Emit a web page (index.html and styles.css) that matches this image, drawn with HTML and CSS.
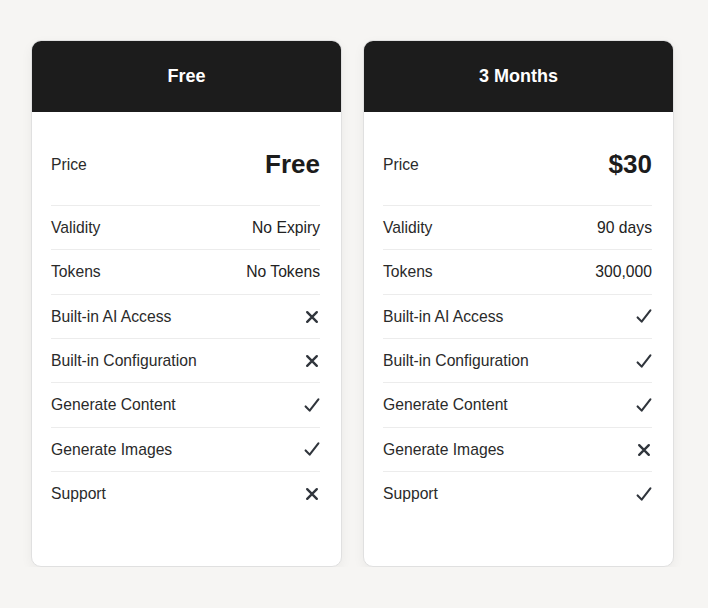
FILE: index.html
```html
<!DOCTYPE html>
<html>
<head>
<meta charset="utf-8">
<link rel="stylesheet" href="styles.css">
</head>
<body>
<div class="plans">
  <div class="card">
    <div class="card-head">Free</div>
    <div class="card-body">
      <div class="row price-row"><span class="label">Price</span><span class="price">Free</span></div>
      <div class="row"><span class="label">Validity</span><span class="value">No Expiry</span></div>
      <div class="row"><span class="label">Tokens</span><span class="value">No Tokens</span></div>
      <div class="row"><span class="label">Built-in AI Access</span><svg class="icon" viewBox="0 0 16 16"><path d="M2.5 2.5L13.5 13.5M13.5 2.5L2.5 13.5"/></svg></div>
      <div class="row"><span class="label">Built-in Configuration</span><svg class="icon" viewBox="0 0 16 16"><path d="M2.5 2.5L13.5 13.5M13.5 2.5L2.5 13.5"/></svg></div>
      <div class="row"><span class="label">Generate Content</span><svg class="icon check" viewBox="0 0 16 16"><path d="M1.2 9L5.5 13.5L14.8 1.5"/></svg></div>
      <div class="row"><span class="label">Generate Images</span><svg class="icon check" viewBox="0 0 16 16"><path d="M1.2 9L5.5 13.5L14.8 1.5"/></svg></div>
      <div class="row"><span class="label">Support</span><svg class="icon" viewBox="0 0 16 16"><path d="M2.5 2.5L13.5 13.5M13.5 2.5L2.5 13.5"/></svg></div>
    </div>
  </div>
  <div class="card">
    <div class="card-head">3 Months</div>
    <div class="card-body">
      <div class="row price-row"><span class="label">Price</span><span class="price">$30</span></div>
      <div class="row"><span class="label">Validity</span><span class="value">90 days</span></div>
      <div class="row"><span class="label">Tokens</span><span class="value">300,000</span></div>
      <div class="row"><span class="label">Built-in AI Access</span><svg class="icon check" viewBox="0 0 16 16"><path d="M1.2 9L5.5 13.5L14.8 1.5"/></svg></div>
      <div class="row"><span class="label">Built-in Configuration</span><svg class="icon check" viewBox="0 0 16 16"><path d="M1.2 9L5.5 13.5L14.8 1.5"/></svg></div>
      <div class="row"><span class="label">Generate Content</span><svg class="icon check" viewBox="0 0 16 16"><path d="M1.2 9L5.5 13.5L14.8 1.5"/></svg></div>
      <div class="row"><span class="label">Generate Images</span><svg class="icon" viewBox="0 0 16 16"><path d="M2.5 2.5L13.5 13.5M13.5 2.5L2.5 13.5"/></svg></div>
      <div class="row"><span class="label">Support</span><svg class="icon check" viewBox="0 0 16 16"><path d="M1.2 9L5.5 13.5L14.8 1.5"/></svg></div>
    </div>
  </div>
</div>
</body>
</html>
```

FILE: styles.css
```css
html, body {
  margin: 0;
  padding: 0;
  background: #f6f5f3;
  font-family: "Liberation Sans", Arial, sans-serif;
}
.plans {
  display: flex;
  gap: 21px;
  padding: 40px 0 0 31px;
}
.card {
  width: 311px;
  height: 527px;
  box-sizing: border-box;
  background: #fff;
  border: 1px solid #e0e0e0;
  border-radius: 10px;
  overflow: hidden;
  box-shadow: 0 4px 12px rgba(0,0,0,0.05);
  display: flex;
  flex-direction: column;
}
.card-head {
  background: #1c1c1c;
  color: #fff;
  font-weight: bold;
  font-size: 18px;
  text-align: center;
  height: 72px;
  line-height: 72px;
  margin-top: -1px;
  margin-left: -1px;
  margin-right: -1px;
}
.card-body {
  padding: 0 21px 0 19px;
}
.row {
  display: flex;
  justify-content: space-between;
  align-items: center;
  height: 42.33px;
  padding-top: 1px;
  border-bottom: 1px solid #ececec;
  font-size: 15.7px;
  color: #222;
}
.row:last-child {
  border-bottom: none;
}
.price-row {
  height: 94px;
  padding-top: 12px;
  box-sizing: border-box;
}
.label {
  color: #2a2a2a;
}
.value {
  color: #222;
}
.price {
  font-size: 26px;
  font-weight: bold;
  color: #1c1c1c;
}
.icon {
  width: 14px;
  height: 14px;
  fill: none;
  stroke: #30353c;
  stroke-width: 2.7;
  stroke-linecap: round;
  stroke-linejoin: round;
  margin-right: 1px;
}
.icon.check {
  width: 16px;
  height: 15px;
  stroke-width: 2.2;
  margin-right: 0;
}
```
